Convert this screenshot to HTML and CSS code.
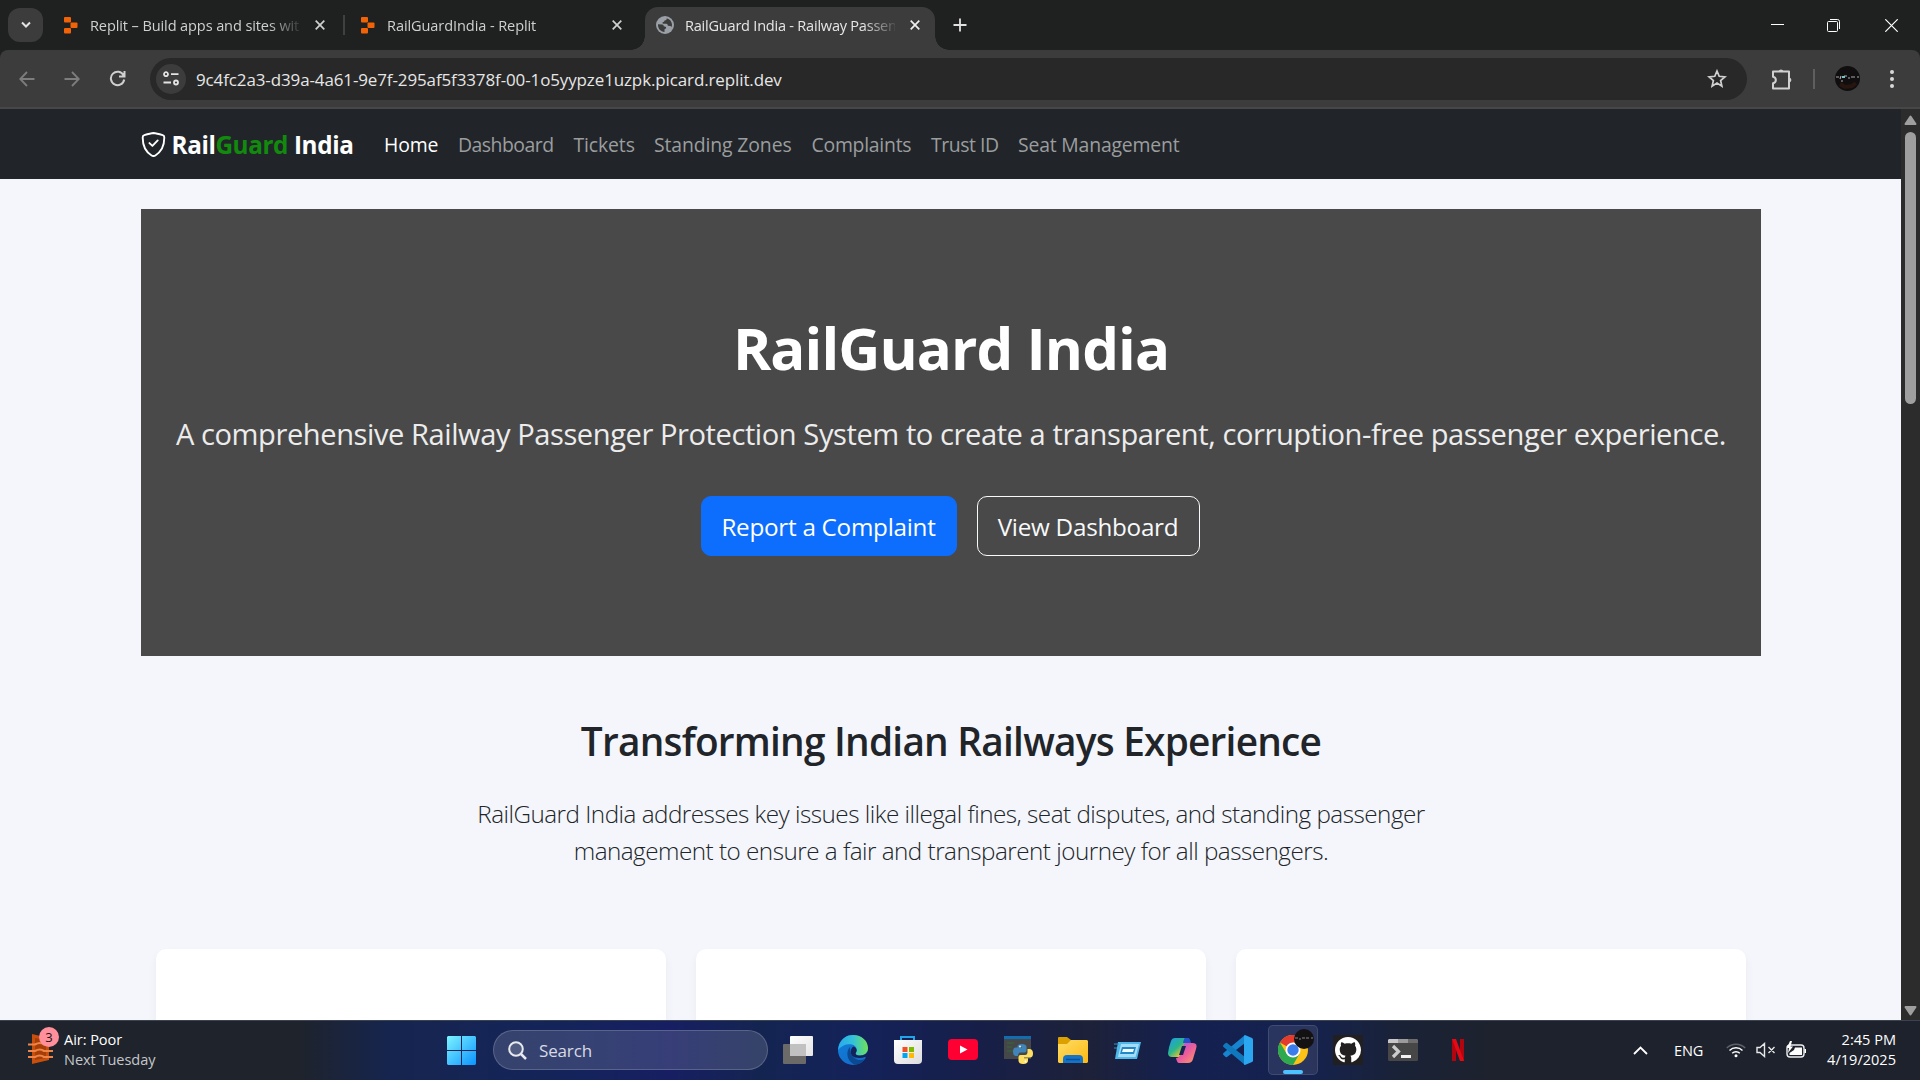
FILE: index.html
```html
<!DOCTYPE html>
<html lang="en">
<head>
<meta charset="utf-8">
<title>RailGuard India - Railway Passenger Protection</title>
<link rel="stylesheet" href="styles.css">
</head>
<body>
<div class="screen">
  <div class="tabstrip">
    <div class="tab-search"><svg width="12" height="8" viewBox="0 0 12 8" fill="none" stroke="#e3e3e3" stroke-width="2"><path d="M2 1.5l4 4 4-4"/></svg></div>
    <div class="tab tab-one">
      <svg class="favicon" width="14" height="17" viewBox="0 0 14 17" fill="#f26207"><rect width="7" height="5.5" rx="1"/><rect x="6.5" y="5.5" width="7" height="5.5" rx="1"/><rect y="11" width="7" height="5.5" rx="1"/></svg>
      <span class="tab-title">Replit – Build apps and sites wit</span>
      <svg class="tab-close" width="10" height="10" viewBox="0 0 10 10" stroke="#d0d0d0" stroke-width="1.7"><path d="M.7.7l8.6 8.6M9.3.7L.7 9.3"/></svg>
    </div>
    <div class="tab-divider"></div>
    <div class="tab tab-two">
      <svg class="favicon" width="14" height="17" viewBox="0 0 14 17" fill="#f26207"><rect width="7" height="5.5" rx="1"/><rect x="6.5" y="5.5" width="7" height="5.5" rx="1"/><rect y="11" width="7" height="5.5" rx="1"/></svg>
      <span class="tab-title">RailGuardIndia - Replit</span>
      <svg class="tab-close" width="10" height="10" viewBox="0 0 10 10" stroke="#d0d0d0" stroke-width="1.7"><path d="M.7.7l8.6 8.6M9.3.7L.7 9.3"/></svg>
    </div>
    <div class="tab tab-active">
      <svg class="favicon" width="18" height="18" viewBox="0 0 18 18"><circle cx="9" cy="9" r="9" fill="#9aa0a6"/><path d="M2 8.2l4.2.3c1 .1 1.6.9 1.5 1.8l1.7.5c.9.3 1 1.5.1 1.9l-1 .5V16C4.5 15.8 2 12.5 2 9zM10.8 2.300c-.1 1.500-.9 2.200-2.200 2.200-.4 1.300-1 1.800-2.100 1.700l.3 1.500h3.400c1.300 0 1.700 1 1.600 2.100l2.500.1c.8 0 1.100.9.9 1.700.7-1 .8-2 .8-3-.2-3-2.200-5.500-5.200-6.300z" fill="#3c3c3c"/></svg>
      <span class="tab-title">RailGuard India - Railway Passen</span>
      <svg class="tab-close" width="10" height="10" viewBox="0 0 10 10" stroke="#f0f0f0" stroke-width="1.7"><path d="M.7.7l8.6 8.6M9.3.7L.7 9.3"/></svg>
    </div>
    <svg class="new-tab" width="14" height="14" viewBox="0 0 14 14" stroke="#e0e0e0" stroke-width="1.8"><path d="M7 .5v13M.5 7h13"/></svg>
    <div class="window-controls">
      <svg width="13" height="13" viewBox="0 0 13 13" stroke="#fff" stroke-width="1"><path d="M0 5.500h13"/></svg>
      <svg width="13" height="13" viewBox="0 0 13 13" fill="none" stroke="#fff"><rect x=".5" y="2.500" width="10" height="10" rx="1"/><path d="M3 .5h7.500a2 2 0 0 1 2 2V10"/></svg>
      <svg width="13" height="13" viewBox="0 0 13 13" stroke="#fff" stroke-width="1.2"><path d="M.3.3l12.400 12.400M12.700.3L.3 12.700"/></svg>
    </div>
  </div>

  <div class="toolbar">
    <svg class="tool" width="16" height="16" viewBox="0 0 16 16" fill="none" stroke="#7d7d7d" stroke-width="1.800"><path d="M15.500 8H1.500M8 1L1.200 8 8 15"/></svg>
    <svg class="tool" width="16" height="16" viewBox="0 0 16 16" fill="none" stroke="#7d7d7d" stroke-width="1.800"><path d="M.5 8h14M8 1l6.800 7L8 15"/></svg>
    <svg class="tool" width="17" height="17" viewBox="0 0 17 17" fill="none" stroke="#d0d0d0" stroke-width="2"><path d="M14.600 5.500A6.700 6.700 0 1 0 15.200 9.500M15.500 1v5.500H10"/></svg>
    <div class="omnibox">
      <div class="site-info"><svg width="16" height="15" viewBox="0 0 16 15" fill="none" stroke="#e3e3e3" stroke-width="1.800"><circle cx="3" cy="3.200" r="2"/><path d="M8 3.200h7.500M.5 11.500H8"/><circle cx="13" cy="11.500" r="2"/></svg></div>
      <span class="url">9c4fc2a3-d39a-4a61-9e7f-295af5f3378f-00-1o5yypze1uzpk.picard.replit.dev</span>
      <svg class="star" width="20" height="19" viewBox="0 0 20 19" fill="none" stroke="#d0d0d0" stroke-width="1.700"><path d="M10 2l2.200 5.300 5.700.5-4.300 3.700 1.300 5.600-4.900-3-4.900 3 1.300-5.600L2.100 7.800l5.700-.5z"/></svg>
    </div>
    <svg class="puzzle" width="22" height="22" viewBox="0 0 22 22" fill="none" stroke="#d0d0d0" stroke-width="2"><path d="M2 3.500h16v17H2v-5.200c3.800-.8 3.800-5.800 0-6.600z" stroke-linejoin="round"/><path d="M7.500 3.500a2.600 2.600 0 0 1 5 0zM18.500 9.500a2.600 2.600 0 0 1 0 5z" fill="#d0d0d0" stroke="none"/></svg>
    <div class="tool-divider"></div>
    <svg class="avatar" width="25" height="25" viewBox="0 0 25 25"><circle cx="12.500" cy="12.500" r="12.500" fill="#100e0e"/><path d="M5 18l5 3 7-1 4-3" stroke="#27160f" stroke-width="4" fill="none"/><path d="M1 11h3M5 13l1-3M9 10h3M13 12h2M16 11h4M22 11h2M6 15h2" stroke="#aaa" stroke-width="1.200"/><path d="M7 11h3" stroke="#74c6cc" stroke-width="2"/></svg>
    <svg class="menu" width="4" height="18" viewBox="0 0 4 18" fill="#d8d8d8"><circle cx="2" cy="2" r="2"/><circle cx="2" cy="9" r="2"/><circle cx="2" cy="16" r="2"/></svg>
  </div>

  <div class="viewport">
    <div class="page">
      <nav class="navbar">
        <svg class="shield" width="25" height="25" viewBox="0 0 16 16" fill="none" stroke="#fff" stroke-width="1.200"><path d="M8 .65C6.300.8 3.800 1.500 2.100 2 1.300 2.200 1.100 2.700 1.100 3.400 1 9.500 3.500 13 6.800 15q1.200.8 2.400 0C12.500 13 15 9.500 14.900 3.400c0-.7-.2-1.200-1-1.400C12.200 1.500 9.700.8 8 .65z"/><path d="M5.400 7.100l1.900 1.800 3.400-3.500" stroke-linecap="round" stroke-linejoin="round"/></svg>
        <a class="brand">Rail<span>Guard</span> India</a>
        <ul class="links">
          <li class="current">Home</li>
          <li class="w-dashboard">Dashboard</li>
          <li class="w-tickets">Tickets</li>
          <li class="w-zones">Standing Zones</li>
          <li class="w-complaints">Complaints</li>
          <li class="w-trust">Trust ID</li>
          <li class="w-seat">Seat Management</li>
        </ul>
      </nav>
      <main class="container">
        <section class="hero">
          <h1>RailGuard India</h1>
          <p>A comprehensive Railway Passenger Protection System to create a transparent, corruption-free passenger experience.</p>
          <div class="actions"><a class="btn btn-primary">Report a Complaint</a><a class="btn btn-outline">View Dashboard</a></div>
        </section>
        <section class="intro">
          <h2>Transforming Indian Railways Experience</h2>
          <p>RailGuard India addresses key issues like illegal fines, seat disputes, and standing passenger<br>management to ensure a fair and transparent journey for all passengers.</p>
        </section>
        <section class="cards"><div class="card"></div><div class="card"></div><div class="card"></div></section>
      </main>
    </div>
    <div class="scrollbar">
      <svg width="13" height="10" viewBox="0 0 13 10" fill="#9f9f9f" stroke="#9f9f9f" stroke-width="2" stroke-linejoin="round"><path d="M1.500 9h10L6.500 1.500z"/></svg>
      <div class="thumb"></div>
      <svg width="13" height="10" viewBox="0 0 13 10" fill="#9f9f9f" stroke="#9f9f9f" stroke-width="2" stroke-linejoin="round"><path d="M1.500 1h10L6.500 8.500z"/></svg>
    </div>
  </div>

  <footer class="taskbar">
    <div class="weather">
      <div class="weather-icon">
        <svg width="25" height="30" viewBox="0 0 25 30"><path d="M4 0l17 4v22L4 30z" fill="#c94f0c"/><path d="M7 4l11 2v18L7 26z" fill="#a53e08"/><path d="M0 10.500h7q5-3 9 0h9M0 17h7q5-3 9 0h9M0 23h7q5-3 9 0h9" fill="none" stroke="#f08446" stroke-width="2.200"/></svg>
        <span class="badge">3</span>
      </div>
      <div class="two-line"><b>Air: Poor</b><span>Next Tuesday</span></div>
    </div>
    <svg class="start" width="29" height="29" viewBox="0 0 29 29"><defs><linearGradient id="win" x2="29" y2="29" gradientUnits="userSpaceOnUse"><stop stop-color="#7df3ff"/><stop offset="1" stop-color="#0b93ff"/></linearGradient></defs><path d="M1 0h13v14H0V1zM15 0h13l1 1v13H15zM0 15h14v14H1l-1-1zM15 15h14v13l-1 1H15z" fill="url(#win)"/></svg>
    <div class="search">
      <svg width="19" height="19" viewBox="0 0 19 19" fill="#ffffff22" stroke="#e8e9ee" stroke-width="2"><circle cx="8" cy="8" r="6.800"/><path d="M13 13l5 5" stroke-width="2.500"/></svg>
      <span>Search</span>
    </div>
    <div class="apps">
      <div class="app"><svg width="30" height="30" viewBox="0 0 30 30"><defs><linearGradient id="tv" y2="1"><stop stop-color="#fff"/><stop offset="1" stop-color="#e4e4e4"/></linearGradient></defs><rect y="9" width="23" height="20" rx="1" fill="#6c6a69"/><rect x="7" y="1" width="23" height="20" rx="1" fill="url(#tv)"/><rect x="7" y="9" width="16" height="12" fill="#c2c1c1"/></svg></div>
      <div class="app"><svg width="30" height="30" viewBox="0 0 30 30"><defs><linearGradient id="eg"><stop stop-color="#29a9ee"/><stop offset=".5" stop-color="#33c2d8"/><stop offset="1" stop-color="#6fe356"/></linearGradient><linearGradient id="eb" y2="1"><stop stop-color="#0f80dc"/><stop offset="1" stop-color="#1468c4"/></linearGradient></defs><circle cx="15" cy="15" r="15" fill="url(#eb)"/><path d="M1 10C4 3 9 0 15 0c9 0 15 6 15 13 0 5-4 7.500-8 7.500-4 0-5-1.500-4-3 2-3 0-7-4-8C9 8.300 4 10 0 15z" fill="url(#eg)"/><path d="M12 12c-4 4-4 13 4 17.500 4 .5 8-1.500 11-5.500-6 3-15 0-15-12z" fill="#0b4a92"/><path d="M15.500 11.500c-3 2-3.500 6-1.500 9 3 3 9 3 13 1.500l3 2V16c-2 4-6 4.500-8 4.500-4 0-5-1.500-4-3 1.500-2 .5-5-2.500-6z" fill="#14235a"/></svg></div>
      <div class="app"><svg width="30" height="30" viewBox="0 0 30 30"><defs><linearGradient id="st" y2="1"><stop stop-color="#fff"/><stop offset="1" stop-color="#dcdcde"/></linearGradient></defs><path d="M8 7V2h13v5" fill="none" stroke="#22a5e8" stroke-width="2"/><path d="M1 5h28v20a4 4 0 0 1-4 4H5a4 4 0 0 1-4-4z" fill="url(#st)"/><path d="M9.500 12h5v5h-5z" fill="#f25022"/><path d="M16 12h5v5h-5z" fill="#7fba00"/><path d="M9.500 18h5v5h-5z" fill="#00a4ef"/><path d="M16 18h5v5h-5z" fill="#ffb900"/></svg></div>
      <div class="app"><svg width="30" height="30" viewBox="0 0 30 30"><rect y="4" width="30" height="21" rx="4" fill="#ff0033"/><path d="M12 10.500v8l7.500-4z" fill="#fff"/></svg></div>
      <div class="app"><svg width="30" height="30" viewBox="0 0 30 30"><rect x="1" y="1" width="27" height="23" fill="#464748"/><rect x="1" y="1" width="27" height="3" fill="#126db0"/><path d="M4 8h7M4 12h5M4 16h8" stroke="#2f6d35" stroke-width="1.200"/><path d="M14.500 12.500v-1.500q.5-2 4.500-2t4.500 2.500v4q0 2-2 2h-4q-2.500 0-2.500 3.500h-2.500q-2.500-.5-2.500-4.500t3-4h6v-.500z" fill="#4084b8"/><path d="M24.500 14h2.500q3 .5 3 4.500t-3 4h-6v.800h4v2.500q0 3-4.500 3.200t-5-3v-4q0-2 2-2h4.500q2.500 0 2.500-3z" fill="#ffdf63"/><circle cx="17" cy="11.500" r=".9" fill="#fff"/><circle cx="22.500" cy="26.500" r=".9" fill="#fff"/></svg></div>
      <div class="app"><svg width="30" height="30" viewBox="0 0 30 30"><defs><linearGradient id="fo" x2="1" y2="1"><stop stop-color="#ffdd66"/><stop offset="1" stop-color="#fcb912"/></linearGradient></defs><path d="M0 3q0-1 1-1h8l4 3h4v5H0z" fill="#dca000"/><path d="M0 9h9l4-4h16l1 1v21l-1 1H1l-1-1z" fill="url(#fo)"/><path d="M5 28v-4q0-4 4-4h12q4 0 4 4v4z" fill="#1674c8"/><path d="M8 24.500h14" stroke="#0b4f96" stroke-width="1.500"/></svg></div>
      <div class="app"><svg width="30" height="30" viewBox="0 0 30 30"><path d="M5 7h23l-4 17H2z" fill="#4fb7ea"/><path d="M8 9h18l-3.500 13H5z" fill="#a6ddf6"/><path d="M9 12h14l-2 7H7z" fill="#2088c4"/><path d="M10 14h11l-1 3H9z" fill="#eefaff"/><path d="M1 9h5M1 13h3" stroke="#3395c8"/></svg></div>
      <div class="app"><svg width="30" height="30" viewBox="0 0 30 30"><defs><linearGradient id="ca" y2="1"><stop stop-color="#1c9cf0"/><stop offset=".45" stop-color="#2bb58c"/><stop offset=".75" stop-color="#e5c62f"/><stop offset="1" stop-color="#f5713a"/></linearGradient><linearGradient id="cb" y2="1"><stop stop-color="#a553ee"/><stop offset=".5" stop-color="#e95c9c"/><stop offset="1" stop-color="#ff9a66"/></linearGradient></defs><path d="M7 3h12q3 0 2 4l-5 12q-2 3-5 3H4q-4 0-4-4 1-7 3-12 1-3 4-3z" fill="url(#ca)"/><path d="M17 3h3q2 0 3 5h-8q1-5 2-5z" fill="#2353cc"/><path d="M18 8h7q5 0 3 6l-3 10q-1 4-5 4h-9q-2 0-3-5 3 0 4-3l3-9q1-3 3-3z" fill="url(#cb)"/><path d="M14 11h4l-3 9h-4z" fill="#172450"/></svg></div>
      <div class="app"><svg width="30" height="30" viewBox="0 0 30 30"><path d="M22 0v8L4 22q-1 .5-2-.5l-1.500-1.500q-1-1 0-2z" fill="#1684cf"/><path d="M22 30v-8L4 8q-1-.5-2 .5L.5 10q-1 1 0 2z" fill="#1078bd"/><path d="M22 0l7 3q1 .5 1 1.500v21q0 1-1 1.500l-7 3q-1 0-1-1V1z" fill="#2ba6f0"/></svg></div>
      <div class="app app-open"><svg width="30" height="30" viewBox="0 0 30 30"><circle cx="15" cy="15" r="15" fill="#fbc116"/><path d="M15 15L2 7.500A15 15 0 0 1 28 7.500H15z" fill="#e33b2e"/><path d="M2 7.500A15 15 0 0 0 15 30l6.500-11.300-13-.2z" fill="#2da94f"/><circle cx="15" cy="15" r="7.500" fill="#fff"/><circle cx="15" cy="15" r="5.700" fill="#3b7ded"/></svg>
        <svg class="profile" width="20" height="20" viewBox="0 0 20 20"><circle cx="10" cy="10" r="10" fill="#131111"/><path d="M1 9h3M5 10h2M8 9h3M12 9h3M17 9h2" stroke="#888" stroke-width="1.200"/></svg></div>
      <div class="app"><svg width="30" height="30" viewBox="0 0 30 30"><rect width="30" height="30" fill="#221f20"/><path transform="translate(2 2) scale(1.625)" fill="#fff" d="M8 0C3.580 0 0 3.580 0 8c0 3.540 2.290 6.530 5.470 7.590.4.070.55-.17.55-.38 0-.19-.01-.82-.01-1.490-2.010.37-2.530-.49-2.690-.94-.09-.23-.48-.94-.82-1.130-.28-.15-.68-.52-.01-.53.63-.01 1.080.58 1.230.82.72 1.210 1.870.87 2.330.66.070-.52.28-.87.51-1.070-1.780-.2-3.640-.89-3.640-3.950 0-.87.31-1.590.82-2.150-.08-.2-.36-1.020.08-2.120 0 0 .67-.21 2.200.82.64-.18 1.320-.27 2-.27s1.360.09 2 .27c1.530-1.040 2.200-.82 2.200-.82.44 1.100.16 1.920.08 2.120.51.56.82 1.270.82 2.150 0 3.070-1.870 3.750-3.650 3.950.29.25.54.73.54 1.480 0 1.070-.01 1.930-.01 2.200 0 .21.15.46.55.38A8.010 8.010 0 0 0 16 8c0-4.420-3.580-8-8-8z"/></svg></div>
      <div class="app"><svg width="30" height="30" viewBox="0 0 30 30"><rect y="4" width="30" height="22" rx="1.500" fill="#474747"/><path d="M1 4h9v4H0V5z" fill="#c9c6c8"/><path d="M10 4h10v4H10z" fill="#9c9a9b"/><path d="M20 4h9l1 1v3H20z" fill="#6d6b6c"/><path d="M5 11l5.500 5.500L5 22" fill="none" stroke="#ccc" stroke-width="3.200"/><path d="M13 21.500h10" stroke="#f2f2f2" stroke-width="3"/></svg></div>
      <div class="app"><svg width="30" height="30" viewBox="0 0 30 30"><path d="M9 4h4v22H9zM17 4h4v22h-4z" fill="#b1060f"/><path d="M9 4h4l8 22h-4z" fill="#e50914"/></svg></div>
    </div>
    <div class="tray">
      <svg class="chevron" width="15" height="9" viewBox="0 0 15 9" fill="none" stroke="#fff" stroke-width="1.800"><path d="M1 8l6.500-6.500L14 8"/></svg>
      <span class="lang">ENG</span>
      <svg class="wifi" width="20" height="16" viewBox="0 0 20 16" fill="none" stroke="#fff" stroke-width="1.500"><path d="M.8 6a13 13 0 0 1 18.400 0" stroke="#5d626a"/><path d="M3.500 8.500a9.300 9.300 0 0 1 13 0M6.200 11.200a5.500 5.500 0 0 1 7.600 0"/><circle cx="10" cy="13.800" r="1.500" fill="#fff" stroke="none"/></svg>
      <svg class="mute" width="20" height="16" viewBox="0 0 20 16" fill="none" stroke="#e8e8e8" stroke-width="1.400"><path d="M1 5.500v5h3l4.500 4V1.500L4 5.500zM12.500 5l6 6M18.500 5l-6 6"/></svg>
      <svg class="battery" width="21" height="18" viewBox="0 0 21 18"><rect x="1" y="4" width="17" height="12" rx="3" fill="none" stroke="#eee" stroke-width="1.400"/><path d="M9 6.500h7v7.500H3.500v-2L8 9zM18.500 8h1.500v4h-1.500zM4 0L1 7h2l-1 5 5-6.500H4.500L6 0z" fill="#fff"/></svg>
      <div class="clock"><span>2:45 PM</span><span>4/19/2025</span></div>
    </div>
  </footer>
</div>
</body>
</html>
```
FILE: styles.css
```css
* { box-sizing: border-box; }
body { margin: 0; font-family: "Open Sans", "Noto Sans", sans-serif; overflow: hidden; background: #1f2120; }
svg { display: block; flex: none; }
h1, h2, p, ul { margin: 0; padding: 0; }

.screen { width: 1920px; height: 1080px; display: grid; grid-template-rows: 50px 59px 911px 60px; }

/* Tab strip */
.tabstrip { display: flex; align-items: center; background: #1f2120; padding-left: 8px; }
.tab-search { width: 35px; height: 34px; border-radius: 12px; background: #3c3c3c; display: flex; align-items: center; justify-content: center; }
.tab { display: flex; align-items: center; height: 43px; color: #cfd0cf; font-size: 14.550px; }
.tab-one { width: 300px; padding-left: 21px; }
.tab-two { width: 300px; padding-left: 16px; }
.tab-active { width: 290px; height: 43px; margin-top: 7px; padding: 0 0 7px 11px; border-radius: 13px 13px 0 0; background: #3c3c3c; color: #e6e6e6; position: relative; }
.tab-active::before, .tab-active::after { content: ""; position: absolute; bottom: 0; width: 14px; height: 14px; }
.tab-active::before { left: -14px; background: radial-gradient(circle at 0 0, transparent 13.500px, #3c3c3c 14px); }
.tab-active::after { right: -14px; background: radial-gradient(circle at 100% 0, transparent 13.500px, #3c3c3c 14px); }
.favicon { margin-right: 12px; }
.tab-active .favicon { margin-right: 11px; }
.tab-title { width: 210px; white-space: nowrap; letter-spacing: -0.110px; -webkit-mask-image: linear-gradient(90deg, #000 178px, transparent 214px); mask-image: linear-gradient(90deg, #000 178px, transparent 214px); }
.tab-two .tab-title { letter-spacing: -0.090px; }
.tab-active .tab-title { letter-spacing: -0.230px; }
.tab-close { margin-left: 15px; }
.tab-divider { width: 2px; height: 20px; background: #3f4140; }
.new-tab { margin-left: 18px; }
.window-controls { margin-left: auto; display: flex; padding-right: 22px; }
.window-controls svg { margin-left: 43px; }
.window-controls svg:last-child { margin-left: 45px; }

/* Toolbar */
.toolbar { display: flex; align-items: center; background: #3c3c3c; border-bottom: 2px solid #474747; border-radius: 8px 8px 0 0; padding-left: 19px; }
.tool { margin-right: 29px; }
.tool:nth-child(3) { margin-right: 24px; }
.omnibox { width: 1597px; height: 42px; border-radius: 21px; background: #282828; display: flex; align-items: center; padding: 0 20px 0 6px; }
.site-info { width: 30px; height: 30px; border-radius: 50%; background: #3c3c3c; display: flex; align-items: center; justify-content: center; }
.url { margin-left: 10px; padding-top: 1px; font-size: 16.980px; letter-spacing: -0.110px; color: #e6e6e6; white-space: nowrap; }
.star { margin-left: auto; }
.puzzle { margin-left: 24px; }
.tool-divider { width: 2px; height: 20px; margin-left: 20px; background: #5f5f5f; }
.avatar { margin-left: 20px; }
.menu { margin-left: 30px; }

/* Page */
.viewport { display: flex; min-height: 0; }
.page { flex: 1; height: 911px; overflow: hidden; background: #f4f6fb; color: #212529; }
.navbar { height: 70px; background: #212529; display: flex; align-items: center; padding-left: 140.500px; }
.brand { margin-left: 6px; width: 212.500px; white-space: nowrap; font-size: 24.250px; font-weight: 700; letter-spacing: -0.380px; color: #fff; }
.brand span { color: #118a0d; }
.links { display: flex; list-style: none; font-size: 19.400px; color: #9b9d9f; white-space: nowrap; letter-spacing: -0.120px; }
.links .current { width: 74px; color: #fff; }
.w-dashboard { width: 115.500px; letter-spacing: -0.500px; }
.w-tickets { width: 80.500px; }
.w-zones { width: 157.500px; }
.w-complaints { width: 119.500px; letter-spacing: -0.250px; }
.w-trust { width: 87px; letter-spacing: -0.450px; }
.w-seat { letter-spacing: -0.180px; }
.container { width: 1620px; margin: 30px 0 0 141px; text-align: center; }
.hero { height: 447px; padding-top: 102.500px; background: #494949; color: #fff; }
.hero h1 { font-size: 58.200px; line-height: 72px; font-weight: 700; letter-spacing: -0.930px; }
.hero p { margin-top: 28.500px; font-size: 29.100px; line-height: 45px; letter-spacing: -0.435px; color: #ececec; white-space: nowrap; }
.actions { display: flex; justify-content: center; gap: 20px; margin-top: 39px; padding-right: 2px; }
.btn { height: 60px; border: 1px solid #f8f9fa; border-radius: 10px; font-size: 24.250px; line-height: 59px; letter-spacing: -0.270px; color: #f8f9fa; }
.btn-primary { width: 256px; border-color: #0d6efd; background: #0d6efd; color: #fff; }
.btn-outline { width: 223px; }
.intro { padding-top: 61px; }
.intro h2 { font-size: 38.800px; line-height: 48px; font-weight: 600; letter-spacing: -0.770px; }
.intro p { margin-top: 30px; font-size: 24.250px; line-height: 37px; font-weight: 300; letter-spacing: -0.510px; white-space: nowrap; }
.cards { margin-top: 80px; padding: 0 15.500px 0 14.500px; display: grid; grid-template-columns: repeat(3, 1fr); gap: 30px; }
.card { height: 300px; border-radius: 10px; background: #fff; box-shadow: 0 5px 10px rgba(0, 0, 0, 0.050); }
.scrollbar { width: 19px; background: #2c2c2c; display: flex; flex-direction: column; align-items: center; padding: 6px 0 4px; }
.thumb { width: 11px; height: 272px; margin: 7px 0 auto; border-radius: 6px; background: #9f9f9f; }

/* Taskbar */
.taskbar { display: flex; align-items: center; border-top: 1px solid #3b4350; padding-bottom: 1px; color: #fff; font-size: 14.550px; background: linear-gradient(90deg, #1e232c 0, #1e232c 300px, #16254f 390px, #14245a 560px, #171f62 670px, #142451 760px, #14225a 860px, #171f48 980px, #1d2139 1090px, #14204f 1180px, #152250 1300px, #1a2237 1400px, #1d222c 1500px); }
.weather { display: flex; align-items: center; width: 447px; padding-left: 28px; }
.weather-icon { position: relative; margin: 0 11px 3px 0; }
.badge { position: absolute; left: 11px; top: -7px; width: 20px; height: 20px; border-radius: 50%; background: #ff8f9b; color: #1d1416; font-size: 13px; line-height: 20px; text-align: center; }
.two-line { display: flex; flex-direction: column; line-height: 20px; letter-spacing: -0.050px; padding-bottom: 3px; }
.two-line b { font-weight: 400; }
.two-line span { color: #c5c7ca; }
.search { width: 275px; height: 40px; margin-left: 17px; padding-left: 14px; border: 1px solid #ffffff2e; border-radius: 20px; background: #ffffff24; display: flex; align-items: center; font-size: 17px; color: #d8dae4; }
.search span { margin-left: 12px; letter-spacing: -0.150px; }
.apps { display: flex; margin-left: 2px; }
.app { width: 55px; height: 50px; display: flex; align-items: center; justify-content: center; position: relative; }
.app-open { width: 50px; margin: 0 2px 0 3px; border: 1px solid #ffffff1c; border-radius: 5px; background: #ffffff17; }
.app-open::after { content: ""; position: absolute; bottom: 0; left: 14px; width: 20px; height: 4px; border-radius: 2px; background: #4cc2ff; }
.profile { position: absolute; left: 25px; top: 3px; }
.tray { margin-left: auto; display: flex; align-items: center; padding-right: 24px; }
.lang { margin-left: 26px; width: 52px; padding-bottom: 1px; letter-spacing: -0.100px; }
.mute { margin-left: 10px; }
.battery { margin-left: 10px; }
.clock { width: 89px; display: flex; flex-direction: column; align-items: flex-end; line-height: 20px; padding-bottom: 3px; }
```
